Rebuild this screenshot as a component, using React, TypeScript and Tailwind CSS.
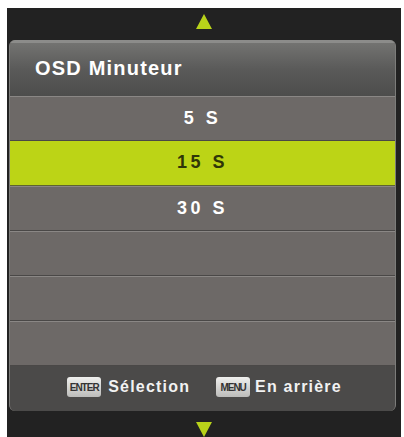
const rows = ['5 S', '15 S', '30 S', '', '', ''];

function Arrow({ down }: { down?: boolean }) {
  return (
    <svg width="16" height="15" viewBox="0 0 16 15" className="block">
      <polygon points={down ? '0,0 16,0 8,15' : '8,0 16,15 0,15'} fill="#b8d21a" />
    </svg>
  );
}

function Key({ label }: { label: string }) {
  return (
    <span className="flex h-[20px] w-[34px] items-center justify-center rounded-[3px] bg-gradient-to-b from-[#f0f0ee] to-[#bcbcba] text-[10px] font-bold tracking-[-1px] text-[#333333]">
      {label}
    </span>
  );
}

export default function App() {
  return (
    <div className="h-[437px] w-[404px] bg-white pl-[7px] pt-[8px] font-['Liberation_Sans',Arial,sans-serif]">
      <div className="flex h-[429px] w-[394px] flex-col bg-[#222222]">
        <div className="flex h-[32px] justify-center pt-[6px]">
          <Arrow />
        </div>
        <div className="ml-[2px] flex h-[372px] w-[387px] flex-col overflow-hidden rounded-[6px] border-x border-[#7c7c7a] bg-[#6d6967]">
          <div className="flex h-[56px] items-center border-t-[3px] border-[#8c8c8a] bg-gradient-to-b from-[#737371] via-[#5a5a59] to-[#4d4d4c] pl-[25px] pb-[2px] text-[20px] font-bold tracking-[1.2px] text-white">
            OSD Minuteur
          </div>
          {rows.map((r, i) => (
            <div
              key={i}
              className={
                i === 1
                  ? 'flex h-[45px] items-center justify-center border-b border-[#5e6430] bg-[#bcd416] text-[18px] font-bold tracking-[3.5px] text-[#2f3608]'
                  : 'flex h-[45px] items-center justify-center border-t border-b border-t-[#8a8785] border-b-[#4a4847] bg-[#6d6967] text-[18px] font-bold tracking-[3.5px] text-white'
              }
            >
              {r}
            </div>
          ))}
          <div className="flex flex-1 items-center justify-center gap-[26px] bg-[#4b4a49] pb-[2px] pl-[4px] text-[16px] font-bold tracking-[1.2px] text-[#f2f2f2]">
            <span className="flex items-center gap-[7px]">
              <Key label="ENTER" />
              Sélection
            </span>
            <span className="flex items-center gap-[5px]">
              <Key label="MENU" />
              En arrière
            </span>
          </div>
        </div>
        <div className="flex flex-1 justify-center pt-[11px]">
          <Arrow down />
        </div>
      </div>
    </div>
  );
}
